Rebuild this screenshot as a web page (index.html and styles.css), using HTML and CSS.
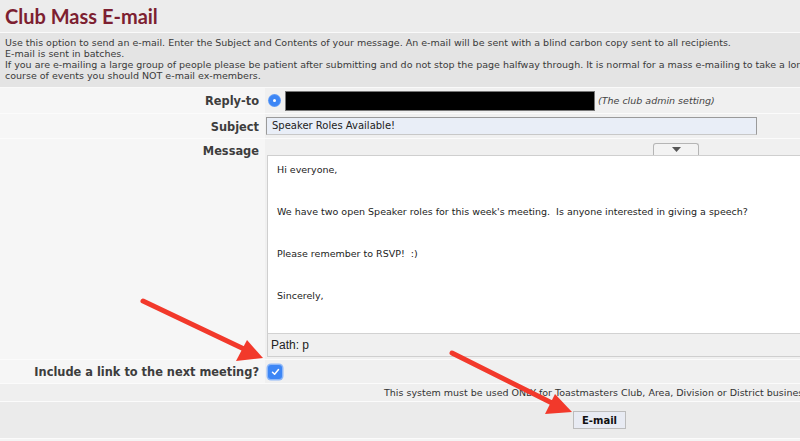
FILE: index.html
```html
<!DOCTYPE html>
<html lang="en">
<head>
    <meta charset="UTF-8">
    <title>Club Mass E-mail</title>
    <link rel="stylesheet" href="styles.css">
</head>
<body>
    <div class="page-title">
        <h1>Club Mass E-mail</h1>
    </div>

    <div class="info">
        Use this option to send an e-mail. Enter the Subject and Contents of your message. An e-mail will be sent with a blind carbon copy sent to all recipients.<br>
        E-mail is sent in batches.<br>
        If you are e-mailing a large group of people please be patient after submitting and do not stop the page halfway through. It is normal for a mass e-mailing to take a long time. In the normal<br>
        course of events you should NOT e-mail ex-members.
    </div>

    <div class="form">
        <div class="label row-reply">Reply-to</div>
        <div class="field row-reply">
            <span class="radio"></span>
            <span class="redacted"></span>
            <span class="hint">(The club admin setting)</span>
        </div>

        <div class="label row-subject">Subject</div>
        <div class="field row-subject">
            <div class="text-input">Speaker Roles Available!</div>
        </div>

        <div class="label row-message">Message</div>
        <div class="field row-message">
            <div class="editor-bar">
                <span class="editor-tab">
                    <svg width="9" height="5" viewBox="0 0 9 5"><path d="M0 0 L9 0 L4.5 5 Z" fill="#555"/></svg>
                </span>
            </div>
            <div class="editor">
                <div class="editor-body">
                    <p>Hi everyone,</p>
                    <p>We have two open Speaker roles for this week's meeting.&nbsp; Is anyone interested in giving a speech?</p>
                    <p>Please remember to RSVP!&nbsp; :)</p>
                    <p>Sincerely,</p>
                </div>
                <div class="editor-path">Path: p</div>
            </div>
        </div>

        <div class="label row-check">Include a link to the next meeting?</div>
        <div class="field row-check">
            <span class="checkbox">
                <svg width="9" height="8" viewBox="0 0 9 8"><path d="M1.5 4.2 L3.6 6.2 L7.5 1.5" fill="none" stroke="#fff" stroke-width="1.5" stroke-linecap="round" stroke-linejoin="round"/></svg>
            </span>
        </div>
    </div>

    <div class="notice">This system must be used ONLY for Toastmasters Club, Area, Division or District business.</div>

    <div class="actions">
        <button class="send-btn">E-mail</button>
    </div>

    <!-- annotation arrows drawn over the screenshot -->
    <svg class="arrows" width="800" height="441" viewBox="0 0 800 441">
        <line x1="143" y1="301" x2="244" y2="349" stroke="#f2392b" stroke-width="5" stroke-linecap="round"/>
        <polygon points="263,358 236,361 247,340" fill="#f2392b"/>
        <line x1="452" y1="353" x2="552" y2="403" stroke="#f2392b" stroke-width="5" stroke-linecap="round"/>
        <polygon points="572,412 545,414 555,394" fill="#f2392b"/>
    </svg>
</body>
</html>
```

FILE: styles.css
```css
body {
    font-family: "DejaVu Sans", Verdana, sans-serif;
    margin: 0;
    width: 800px;
    height: 441px;
    overflow: hidden;
    background-color: #f4f4f4;
    color: #333;
    position: relative;
}
.page-title {
    background: #ececec;
    height: 32px;
    border-bottom: 1px solid #fafafa;
    padding-left: 5px;
    display: flex;
    align-items: center;
}
.page-title h1 {
    margin: 0;
    font-family: Lato, "Open Sans", sans-serif;
    font-size: 20px;
    font-weight: bold;
    color: #7d1f31;
}
.info {
    background: #e4e4e4;
    font-size: 9.5px;
    line-height: 11px;
    padding: 4px 5px 6px;
    white-space: nowrap;
    overflow: hidden;
    color: #3a3a3a;
    border-bottom: 1px solid #fafafa;
}
.form {
    display: grid;
    grid-template-columns: 265px 1fr;
    row-gap: 1px;
    background: #fbfbfb;
}
.label {
    background: #f6f6f6;
    font-weight: bold;
    font-size: 11.4px;
    color: #3d3d3d;
    text-align: right;
    padding: 6px 6px 0 0;
}
.field {
    background: #f0f0f0;
    display: flex;
    align-items: center;
}
.label.row-reply {
    height: 19px;
}
.field.row-reply {
    height: 25px;
    padding-left: 4px;
}
.radio {
    width: 11px;
    height: 11px;
    border-radius: 50%;
    background: #3d86f5;
    box-shadow: 0 0 0 1px #5d9af7;
    position: relative;
    margin-right: 5px;
}
.radio::after {
    content: "";
    position: absolute;
    left: 4px;
    top: 4px;
    width: 3px;
    height: 3px;
    border-radius: 50%;
    background: #fff;
}
.redacted {
    width: 310px;
    height: 20px;
    background: #000;
    border: 1px solid #777;
    box-sizing: border-box;
}
.hint {
    font-style: italic;
    font-size: 9.5px;
    color: #444;
    margin-left: 3px;
}
.label.row-subject {
    height: 18px;
}
.field.row-subject {
    height: 24px;
    padding-left: 1px;
}
.text-input {
    width: 491px;
    height: 18px;
    box-sizing: border-box;
    border: 1px solid #9a9a9a;
    border-bottom-color: #c8c8c8;
    background: #e9eef7;
    font-size: 10px;
    color: #222;
    padding: 2px 5px;
}
.label.row-message {
    padding-top: 5px;
}
.field.row-message {
    flex-direction: column;
    align-items: stretch;
    padding: 3px 0 2px 2px;
}
.editor-bar {
    height: 13px;
    position: relative;
}
.editor-tab {
    position: absolute;
    left: 386px;
    top: 1px;
    width: 46px;
    height: 12px;
    border: 1px solid #b5b5b5;
    border-bottom: none;
    border-radius: 3px 3px 0 0;
    background: #f3f3f3;
    display: flex;
    justify-content: center;
    padding-top: 3px;
    box-sizing: border-box;
}
.editor {
    border: 1px solid #cfcfcf;
    border-right: none;
    background: #fff;
}
.editor-body {
    height: 173px;
    padding: 2px 9px;
    font-size: 9.5px;
    line-height: 14px;
    color: #222;
    white-space: nowrap;
    overflow: hidden;
}
.editor-body p {
    margin: 5px 0 28px;
}
.editor-path {
    background: #f0f0f0;
    border-top: 1px solid #d2d2d2;
    height: 22px;
    font-family: "Liberation Sans", Arial, sans-serif;
    font-size: 12px;
    line-height: 22px;
    padding-left: 3px;
    color: #222;
}
.label.row-check {
    height: 18px;
    padding-top: 5px;
}
.field.row-check {
    height: 23px;
    padding-left: 3px;
}
.checkbox {
    width: 14px;
    height: 14px;
    border-radius: 3px;
    background: #3d86f5;
    box-shadow: 0 0 0 1.5px #8fb8f8;
    display: flex;
    align-items: center;
    justify-content: center;
}
.notice {
    background: #efefef;
    font-size: 9.5px;
    height: 17px;
    line-height: 17px;
    padding-left: 384px;
    white-space: nowrap;
    overflow: hidden;
    border-top: 1px solid #fbfbfb;
    border-bottom: 1px solid #fbfbfb;
    color: #333;
}
.actions {
    background: #ebebeb;
    height: 36px;
    border-bottom: 1px solid #fbfbfb;
    display: flex;
    align-items: center;
    padding-left: 573px;
}
.send-btn {
    font-family: "DejaVu Sans", Verdana, sans-serif;
    font-weight: bold;
    font-size: 10px;
    color: #111;
    background: #e8ebf3;
    border: 1px solid #bcbcbc;
    padding: 2px 8px;
    height: 18px;
}
.arrows {
    position: absolute;
    left: 0;
    top: 0;
    pointer-events: none;
}
```
